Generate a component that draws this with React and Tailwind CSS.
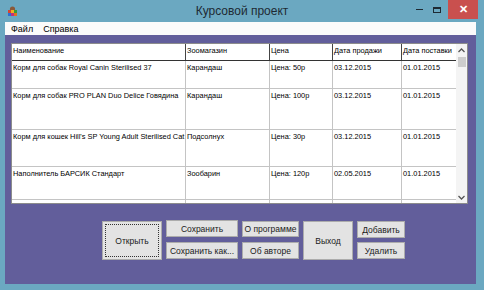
import React from 'react';

const font = { fontFamily: '"Liberation Sans", Arial, sans-serif' };

const cols = [174, 84, 63, 69, 56];

const rows = [
    { h: 28, cells: ['Корм для собак Royal Canin Sterilised 37', 'Карандаш', 'Цена: 50р', '03.12.2015', '01.01.2015'] },
    { h: 41, cells: ['Корм для собак PRO PLAN Duo Delice Говядина', 'Карандаш', 'Цена: 100р', '03.12.2015', '01.01.2015'] },
    { h: 37, cells: ['Корм для кошек Hill\'s SP Young Adult Sterilised Cat', 'Подсолнух', 'Цена: 30р', '03.12.2015', '01.01.2015'] },
    { h: 33, cells: ['Наполнитель БАРСИК Стандарт', 'Зообарин', 'Цена: 120р', '02.05.2015', '01.01.2015'] },
    { h: 30, cells: ['Наполнитель БАРСИК Лето', 'Зообарин', 'Цена: 45р', '15.11.2015', '01.01.2015'] },
];

const headers = ['Наименование', 'Зоомагазин', 'Цена', 'Дата продажи', 'Дата поставки'];

function Btn({ children, className = '' }) {
    return (
        <div className={`flex items-center justify-center bg-[#e3e3e3] border border-[#acacac] text-[8.5px] leading-[10px] text-[#1a1a1a] ${className}`}>
            {children}
        </div>
    );
}

function AppIcon() {
    return (
        <svg width="11" height="11" viewBox="0 0 11 11">
            <circle cx="5.5" cy="3" r="2.6" fill="#8a5a3a" />
            <rect x="1" y="4" width="3" height="3" fill="#d9442c" />
            <rect x="4" y="4" width="3" height="3" fill="#f0b020" />
            <rect x="7" y="4" width="3" height="3" fill="#3a9a3a" />
            <rect x="1" y="7" width="3" height="3" fill="#2f6fd0" />
            <rect x="4" y="7" width="3" height="3" fill="#c03080" />
            <rect x="7" y="7" width="3" height="3" fill="#e07020" />
        </svg>
    );
}

export default function App() {
    return (
        <div style={font} className="w-[484px] h-[290px] bg-[#6ba8c1] flex flex-col overflow-hidden">
            {/* Title bar */}
            <div className="h-[22px] flex items-center relative shrink-0">
                <div className="ml-[7px] mt-[1px]"><AppIcon /></div>
                <div className="absolute left-0 right-0 top-[3px] text-center text-[12px] leading-[16px] text-[#1e2a33]">Курсовой проект</div>
                <div className="ml-auto flex items-start h-full">
                    <div className="w-[18px] h-[19px] flex items-center justify-center">
                        <div className="w-[7px] h-[1.5px] bg-[#1e2a33]" />
                    </div>
                    <div className="w-[18px] h-[19px] flex items-center justify-center">
                        <div className="w-[8px] h-[6px] border border-[#1e2a33] border-t-2" />
                    </div>
                    <div className="w-[30px] h-[19px] bg-[#c9504e] ml-[2px] mr-[6px] flex items-center justify-center text-white text-[11px] font-bold">✕</div>
                </div>
            </div>

            <div className="flex-1 flex flex-col ml-[5px] mr-[8px] mb-[6px]">
                {/* Menu */}
                <div className="h-[13px] bg-[#fbfbfb] flex items-center gap-[10px] pl-[6px] text-[9px] leading-[12px] text-black shrink-0">
                    <span>Файл</span>
                    <span>Справка</span>
                </div>

                {/* Body */}
                <div className="flex-1 bg-[#625e9b] pl-[6px] pt-[8px]">
                    <div className="w-[457px] h-[161px] bg-white border border-[#8c8c8c] flex overflow-hidden">
                        <div className="flex-1 flex flex-col overflow-hidden">
                            <div className="flex h-[17px] shrink-0 border-b border-[#333]">
                                {headers.map((h, i) => (
                                    <div key={h} style={{ width: cols[i] }} className={`shrink-0 whitespace-nowrap overflow-hidden text-[7.4px] leading-[11px] text-black pl-[1px] pt-[1px] ${i < 4 ? 'border-r border-[#444]' : ''}`}>
                                        {h}
                                    </div>
                                ))}
                            </div>
                            {rows.map((r, ri) => (
                                <div key={ri} style={{ height: r.h }} className="flex shrink-0 border-b border-[#c4c4c4]">
                                    {r.cells.map((c, i) => (
                                        <div key={i} style={{ width: cols[i] }} className={`shrink-0 whitespace-nowrap overflow-hidden text-[7.4px] leading-[11px] text-black pl-[1px] pt-[1px] ${i < 4 ? 'border-r border-[#c4c4c4]' : ''}`}>
                                            {c}
                                        </div>
                                    ))}
                                </div>
                            ))}
                        </div>
                        {/* Scrollbar */}
                        <div className="w-[11px] shrink-0 bg-[#f4f4f4] flex flex-col items-center">
                            <div className="h-[12px] flex items-center justify-center">
                                <svg width="7" height="5" viewBox="0 0 7 5"><path d="M0.5 4 L3.5 1 L6.5 4" stroke="#555" strokeWidth="1.3" fill="none" /></svg>
                            </div>
                            <div className="w-[8px] h-[10px] bg-[#cdcdcd] mt-[1px]" />
                            <div className="flex-1" />
                            <div className="h-[12px] flex items-center justify-center">
                                <svg width="7" height="5" viewBox="0 0 7 5"><path d="M0.5 1 L3.5 4 L6.5 1" stroke="#555" strokeWidth="1.3" fill="none" /></svg>
                            </div>
                        </div>
                    </div>

                    {/* Buttons */}
                    <div className="flex items-start mt-[16px] ml-[91px]">
                        <Btn className="w-[60px] h-[39px] mt-[1px] border-[#707070]">
                            <div className="w-[54px] h-[33px] border border-dotted border-[#333] flex items-center justify-center">Открыть</div>
                        </Btn>
                        <div className="flex flex-col gap-[5px] ml-[4px]">
                            <Btn className="w-[72px] h-[17px]">Сохранить</Btn>
                            <Btn className="w-[72px] h-[17px]">Сохранить как...</Btn>
                        </div>
                        <div className="flex flex-col gap-[5px] ml-[4px] mt-[1px]">
                            <Btn className="w-[57px] h-[16px]">О программе</Btn>
                            <Btn className="w-[57px] h-[17px]">Об авторе</Btn>
                        </div>
                        <Btn className="w-[50px] h-[39px] ml-[4px] mt-[1px]">Выход</Btn>
                        <div className="flex flex-col gap-[4px] ml-[4px] mt-[1px]">
                            <Btn className="w-[48px] h-[17px]">Добавить</Btn>
                            <Btn className="w-[48px] h-[17px]">Удалить</Btn>
                        </div>
                    </div>
                </div>
            </div>
        </div>
    );
}
